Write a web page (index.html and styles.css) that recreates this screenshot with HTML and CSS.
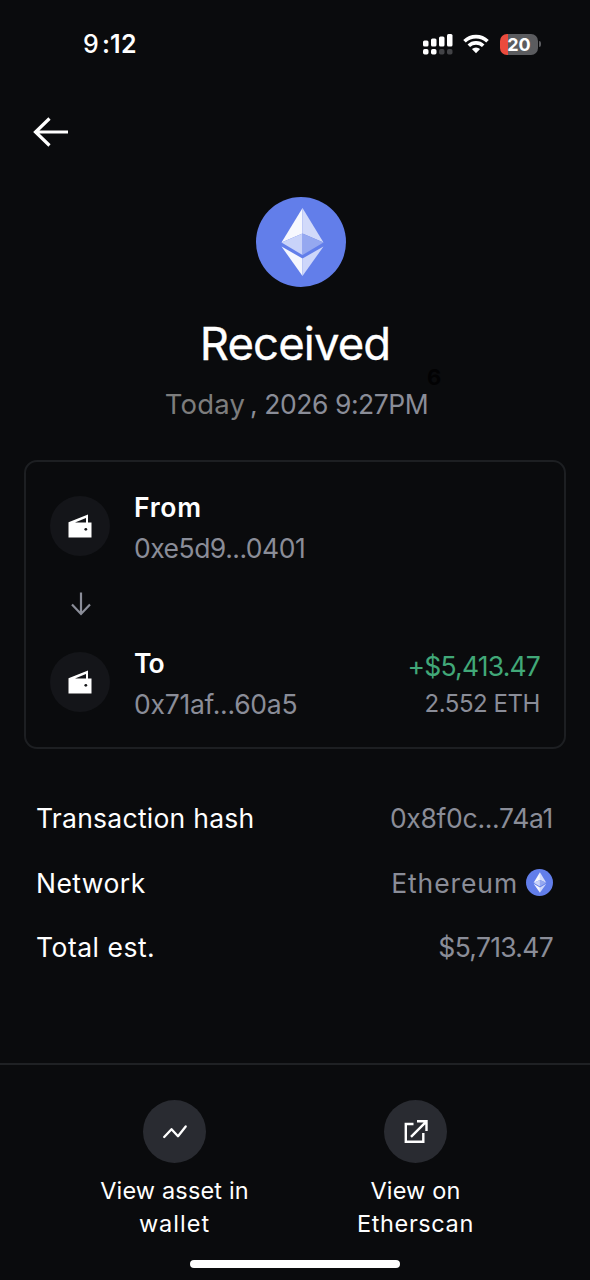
FILE: index.html
```html
<!DOCTYPE html>
<html lang="en">
<head>
<meta charset="utf-8">
<title>Received</title>
<link rel="stylesheet" href="styles.css">
</head>
<body>
<svg width="0" height="0" class="defs">
  <symbol id="eth" viewBox="0 0 90 90">
    <circle cx="45" cy="45" r="45" fill="#627eea"/>
    <path d="M46.500 11 25.500 45.500 46.500 36.500z" fill="#f7f8fe"/>
    <path d="M46.500 11 67.500 45.500 46.500 36.500z" fill="#d2dafa"/>
    <path d="M25.500 45.500 46.500 36.500V58z" fill="#c9d3f9"/>
    <path d="M67.500 45.500 46.500 36.500V58z" fill="#95a8f0"/>
    <path d="M25.500 49.500 46.500 61.500V79z" fill="#f4f6fe"/>
    <path d="M67.500 49.500 46.500 61.500V79z" fill="#cdd6fa"/>
  </symbol>
  <symbol id="wallet" viewBox="0 0 24 24">
    <path d="M0.500 8.300 20 0.500V8.500H23.500V23.500H0.500zM7 8.500H18V4z" fill="#fff" fill-rule="evenodd"/>
    <circle cx="17.800" cy="15.300" r="1.400" fill="#17181b"/>
  </symbol>
</svg>
<main class="screen">
  <div class="status">
    <div class="clock"><span class="hour">9</span>:12</div>
    <div class="indicators">
      <svg class="signal" width="30" height="21" viewBox="0 0 30 21">
        <g fill="#fff">
          <rect x="0" y="6.500" width="5.500" height="6" rx="1.500"/>
          <rect x="8" y="4.500" width="5.500" height="8" rx="1.500"/>
          <rect x="16" y="2.500" width="5.500" height="10" rx="1.500"/>
          <rect x="24" y="0" width="5.500" height="12.500" rx="1.500"/>
          <rect x="0" y="15" width="5.500" height="5.500" rx="1.700"/>
          <rect x="8" y="15" width="5.500" height="5.500" rx="1.700"/>
        </g>
        <g fill="#424346">
          <rect x="16" y="15" width="5.500" height="5.500" rx="1.700"/>
          <rect x="24" y="15" width="5.500" height="5.500" rx="1.700"/>
        </g>
      </svg>
      <svg class="wifi" width="26" height="20" viewBox="0 0 26 20">
        <g fill="none" stroke="#fff" stroke-width="3.600">
          <path d="M1.500 7.300A16.500 16.500 0 0 1 24.500 7.300"/>
          <path d="M5.800 11.800A10.300 10.300 0 0 1 20.200 11.800"/>
        </g>
        <path d="M8.900 15A6 6 0 0 1 17.100 15L13 19.300z" fill="#fff"/>
      </svg>
      <div class="battery"><span class="battery-body">20</span><span class="battery-tip"></span></div>
    </div>
  </div>
  <nav class="nav">
    <svg width="36" height="30" viewBox="0 0 36 30" fill="none" stroke="#fff" stroke-width="3.200">
      <path d="M2 15H35M16.500 1.500 2.500 15 16.500 28.500"/>
    </svg>
  </nav>
  <header class="hero">
    <svg class="hero-coin" width="90" height="90"><use href="#eth"/></svg>
    <h1 class="title">Received</h1>
    <p class="date"><span class="today">Today</span><span class="time">, 2026 9:27PM</span></p>
    <span class="stray">6</span>
  </header>
  <section class="card">
    <div class="party">
      <span class="badge"><svg width="24" height="24"><use href="#wallet"/></svg></span>
      <div class="who"><div class="name from">From</div><div class="addr addr-from">0xe5d9...0401</div></div>
    </div>
    <svg class="down" width="20" height="24" viewBox="0 0 20 24" fill="none" stroke="#8a8d98" stroke-width="2.200">
      <path d="M10 0.500V22M1 12.500 10 22 19 12.500"/>
    </svg>
    <div class="party">
      <span class="badge"><svg width="24" height="24"><use href="#wallet"/></svg></span>
      <div class="who"><div class="name to">To</div><div class="addr addr-to">0x71af...60a5</div></div>
      <div class="amount"><div class="usd">+$5,413.47</div><div class="eth">2.552 ETH</div></div>
    </div>
  </section>
  <dl class="details">
    <div class="row"><dt class="k-hash">Transaction hash</dt><dd class="v-hash">0x8f0c...74a1</dd></div>
    <div class="row"><dt class="k-net">Network</dt><dd class="v-net"><span>Ethereum</span><svg width="27" height="27"><use href="#eth"/></svg></dd></div>
    <div class="row"><dt class="k-total">Total est.</dt><dd class="v-total">$5,713.47</dd></div>
  </dl>
  <footer class="footer">
    <div class="actions">
      <div class="action">
        <span class="action-icon">
          <svg width="26" height="26" viewBox="0 0 26 26" fill="none" stroke="#fff" stroke-width="2.300" stroke-linecap="round" stroke-linejoin="round"><path d="M2.200 18 9.500 10.200 16 17.200 23.700 7.500"/></svg>
        </span>
        <span class="label">View asset in<br><span class="wide">wallet</span></span>
      </div>
      <div class="action">
        <span class="action-icon">
          <svg width="26" height="26" viewBox="0 0 26 26" fill="none" stroke="#fff" stroke-width="2.400"><path d="M10.500 5H2.800V22.800H20.300V14M8 17.800 23 2.800M14 2.300H23.500V12"/></svg>
        </span>
        <span class="label">View on<br><span class="semiwide">Etherscan</span></span>
      </div>
    </div>
    <div class="home"></div>
  </footer>
</main>
</body>
</html>
```
FILE: styles.css
```css
* { box-sizing: border-box; }
body { margin: 0; background: #0a0b0d; }
h1, p, dl, dd { margin: 0; }
svg { display: block; flex: none; }
.defs { position: absolute; }
.screen {
  display: flex; flex-direction: column;
  width: 590px; height: 1280px; overflow: hidden;
  background: #0a0b0d; color: #fff;
  font-family: Inter, "Liberation Sans", sans-serif;
  font-size: 26.500px; white-space: nowrap;
}
.status {
  display: flex; justify-content: space-between; align-items: center;
  height: 88px; padding: 0 49px 0 83px;
}
.clock { font-size: 25px; font-weight: 600; letter-spacing: 0.200px; }
.hour { font-weight: 500; margin-right: 3px; }
.indicators { display: flex; align-items: center; }
.wifi { margin: 0 11px 0 10px; }
.battery { display: flex; align-items: center; gap: 1px; }
.battery-body {
  width: 38px; height: 21px; border-radius: 7px;
  background: linear-gradient(90deg, #eb4b3d 8px, #5b5c5f 8px);
  font-size: 18px; font-weight: 700; line-height: 21px; text-align: center;
}
.battery-tip { width: 2px; height: 6px; border-radius: 0 2px 2px 0; background: #5b5c5f; }
.nav { height: 109px; padding: 29px 0 0 33px; }
.hero { position: relative; height: 263px; text-align: center; }
.hero-coin { margin-left: 256px; }
.title {
  margin-top: 28px; font-size: 45.500px; line-height: 57px; font-weight: 400;
  letter-spacing: -0.900px; -webkit-text-stroke: 0.300px #fff;
}
.date { display: flex; justify-content: center; gap: 5px; margin-top: 15px; padding-left: 3px; line-height: 34px; }
.today { color: #7d7d7d; font-size: 27.500px; letter-spacing: 0.200px; }
.time { color: #8a8d98; letter-spacing: -0.450px; }
.stray { position: absolute; left: 427px; top: 166px; color: #020203; font-size: 22px; line-height: 28px; font-weight: 700; }
.card {
  height: 289px; margin: 0 24px; padding: 24px 24px 0 24px;
  border: 2px solid #1d1f22; border-radius: 13px;
}
.party { display: flex; align-items: center; height: 80px; }
.badge {
  display: flex; align-items: center; justify-content: center; flex: none;
  width: 60px; height: 60px; border-radius: 50%; background: #141519;
}
.who { margin-left: 24px; padding-top: 3px; }
.name { font-weight: 600; line-height: 41px; }
.from { letter-spacing: 0.700px; }
.to { letter-spacing: -0.800px; }
.addr { line-height: 41px; color: #8a8d98; }
.addr-from { letter-spacing: -0.500px; }
.addr-to { letter-spacing: -0.250px; }
.down { margin: 26px 0 26px 21px; }
.amount { margin-left: auto; padding-top: 4px; text-align: right; }
.usd { color: #41a878; line-height: 40px; letter-spacing: -0.800px; }
.eth { color: #8a8d98; font-size: 24px; line-height: 36px; letter-spacing: -0.450px; }
.details { margin-top: 37px; padding: 0 37px 0 36px; }
.row { display: flex; justify-content: space-between; align-items: center; height: 64.500px; }
.row dd { color: #8a8d98; }
.k-hash { letter-spacing: 0.250px; }
.k-net { letter-spacing: 0.450px; }
.k-total { letter-spacing: 0.500px; }
.v-hash { letter-spacing: -0.300px; }
.v-total { letter-spacing: -0.700px; }
.v-net { display: flex; align-items: center; gap: 8px; letter-spacing: 0.900px; }
.footer { margin-top: auto; height: 217px; border-top: 2px solid #1f2124; }
.actions { display: flex; justify-content: center; padding-top: 35px; }
.action { display: flex; flex-direction: column; align-items: center; width: 241px; gap: 11px; }
.action-icon {
  display: flex; align-items: center; justify-content: center;
  width: 63px; height: 63px; border-radius: 50%; background: #292b31;
}
.label { font-size: 23.500px; line-height: 33px; text-align: center; letter-spacing: 0.150px; }
.wide { letter-spacing: 1px; }
.semiwide { letter-spacing: 0.600px; }
.home { width: 210px; height: 8px; margin: 20px auto 0; border-radius: 4px; background: #fff; }
```
